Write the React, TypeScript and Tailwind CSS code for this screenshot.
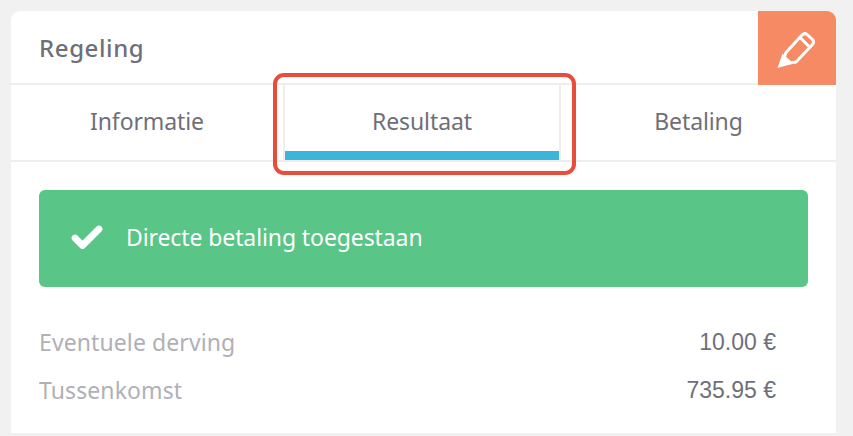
import { Check } from 'lucide-react'

function Pencil() {
  return (
    <svg width="40" height="40" viewBox="0 0 40 40" fill="none">
      <path
        d="M6 34 L10 22.5 L26 5 Q28.5 2.5 31 4.5 L36.5 9.5 Q38.5 12 36.5 14.5 L20 32 Z"
        stroke="#fff"
        strokeWidth="3"
        strokeLinejoin="round"
      />
      <path d="M1.5 38 L6.5 23.5 L17.5 33.5 Z" fill="#fff" />
      <path d="M24 7.5 L33 16.5" stroke="#fff" strokeWidth="3" />
    </svg>
  )
}

export default function App() {
  return (
    <div className="relative h-[436px] w-[853px] overflow-hidden bg-[#f1f1f1] pt-[11px] pl-[11px] font-['Noto_Sans',sans-serif]">
      <div className="h-[422px] w-[825px] rounded-t-[9px] bg-white">
        {/* Header */}
        <div className="flex h-[74px] items-stretch justify-between border-b-2 border-[#eeeeee]">
          <h2 className="pl-[28px] pt-[19px] text-[24px] leading-[36px] font-medium tracking-[0.6px] text-[#6f6f78]">
            Regeling
          </h2>
          <div className="flex h-[74px] w-[78px] items-center justify-center rounded-tr-[9px] bg-[#f68a64] pt-[4px] pr-[2px]">
            <Pencil />
          </div>
        </div>

        {/* Tabs */}
        <div className="flex h-[77px] border-b-2 border-[#eeeeee] text-[23px] tracking-[-0.1px] text-[#6f6f78]">
          <div className="flex w-[272px] items-center justify-center pb-[3px]">Informatie</div>
          <div className="flex w-[278px] flex-col border-x-2 border-[#eeeeee]">
            <div className="flex flex-1 items-center justify-center pt-[6px]">Resultaat</div>
            <div className="h-[9px] bg-[#3cb5d8]" />
          </div>
          <div className="flex flex-1 items-center justify-center pb-[3px]">Betaling</div>
        </div>

        {/* Status */}
        <div className="px-[28px] pt-[28px]">
          <div className="flex h-[97px] items-center gap-[21px] rounded-[6px] bg-[#59c586] pb-[2px] pl-[30px] text-[23px] tracking-[-0.1px] text-white">
            <Check size={36} strokeWidth={4.5} />
            <span>Directe betaling toegestaan</span>
          </div>

          <div className="mt-[40px] flex flex-col gap-[18px] pr-[32px] text-[23px] leading-[30px]">
            <div className="flex justify-between">
              <span className="tracking-[0.1px] text-[#b0b0b6]">Eventuele derving</span>
              <span className="font-['Liberation_Sans',sans-serif] text-[#6f6f78]">10.00 €</span>
            </div>
            <div className="flex justify-between">
              <span className="tracking-[0.1px] text-[#b0b0b6]">Tussenkomst</span>
              <span className="font-['Liberation_Sans',sans-serif] text-[#6f6f78]">735.95 €</span>
            </div>
          </div>
        </div>
      </div>

      {/* Red highlight */}
      <div className="absolute top-[73px] left-[273px] h-[102px] w-[303px] rounded-[11px] border-4 border-[#e74c3c]" />
    </div>
  )
}
